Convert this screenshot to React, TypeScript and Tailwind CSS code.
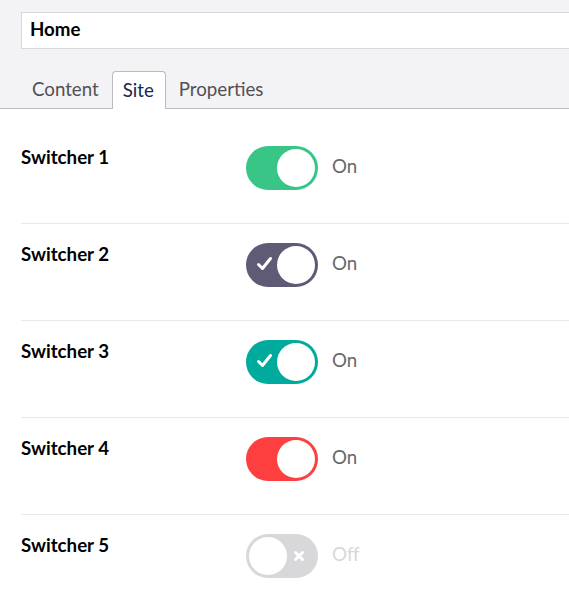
import React from "react";

type Sw = { label: string; on: boolean; color: string; icon: "none" | "check" };

const rows: Sw[] = [
  { label: "Switcher 1", on: true, color: "bg-[#38c585]", icon: "none" },
  { label: "Switcher 2", on: true, color: "bg-[#5f5a76]", icon: "check" },
  { label: "Switcher 3", on: true, color: "bg-[#00ab9e]", icon: "check" },
  { label: "Switcher 4", on: true, color: "bg-[#fd3f3f]", icon: "none" },
  { label: "Switcher 5", on: false, color: "bg-[#d8d7d9]", icon: "none" },
];

function Check() {
  return (
    <svg width="17" height="15" viewBox="0 0 17 15" className="absolute left-[10px] top-[13px]">
      <path d="M2.5 8.5 L6.5 12.5 L14.5 2.5" stroke="white" strokeWidth="3" fill="none" strokeLinecap="round" strokeLinejoin="round" />
    </svg>
  );
}

function Cross() {
  return (
    <svg width="12" height="12" viewBox="0 0 12 12" className="absolute left-[47px] top-[16px]">
      <path d="M2.5 2.5 L9.5 9.5 M9.5 2.5 L2.5 9.5" stroke="white" strokeWidth="3" fill="none" strokeLinecap="round" />
    </svg>
  );
}

function Toggle({ s }: { s: Sw }) {
  return (
    <div className={`relative w-[72px] h-[44px] rounded-full ${s.color}`}>
      {s.icon === "check" && <Check />}
      {!s.on && <Cross />}
      <div
        className={`absolute top-[3px] w-[38px] h-[38px] rounded-full bg-white ${s.on ? "right-[3px]" : "left-[3px]"}`}
      />
    </div>
  );
}

export default function App() {
  return (
    <div className="w-[569px] h-[605px] bg-white overflow-hidden font-['Lato',sans-serif]">
      <div className="bg-[#f3f3f5] pt-[12px] pl-[21px] border-b border-[#bbbabf]">
        <div className="w-[600px] h-[37px] bg-white border border-[#d8d7d9] flex items-center pl-[8px] pb-[2px] text-[18.7px] font-bold text-black">
          Home
        </div>
        <div className="flex gap-[2px] mt-[22px] h-[37px]">
          <div className="px-[11px] h-[37px] flex items-center text-[18.7px] text-[#515054]">Content</div>
          <div className="pl-[10px] pr-[11px] h-[38px] -mb-[1px] flex items-center text-[18.7px] text-[#1b264f] bg-white border border-b-0 border-[#bbbabf] rounded-t-[4px]">
            <span className="-mt-[1px]">Site</span>
          </div>
          <div className="px-[11px] h-[37px] flex items-center text-[18.7px] text-[#515054]">Properties</div>
        </div>
      </div>
      <div className="pl-[21px] pt-[18px]">
        {rows.map((s, i) => (
          <div
            key={s.label}
            className={`flex pb-[33px] border-b border-[#e9e9eb] ${i === 0 ? "pt-[19px]" : "pt-[19px]"}`}
          >
            <div className="w-[225px] text-[18.7px] font-bold text-black leading-[22px]">{s.label}</div>
            <Toggle s={s} />
            <div className={`ml-[14px] h-[40px] flex items-center text-[18.7px] ${s.on ? "text-[#68676b]" : "text-[#d8d7d9]"}`}>
              {s.on ? "On" : "Off"}
            </div>
          </div>
        ))}
      </div>
    </div>
  );
}
